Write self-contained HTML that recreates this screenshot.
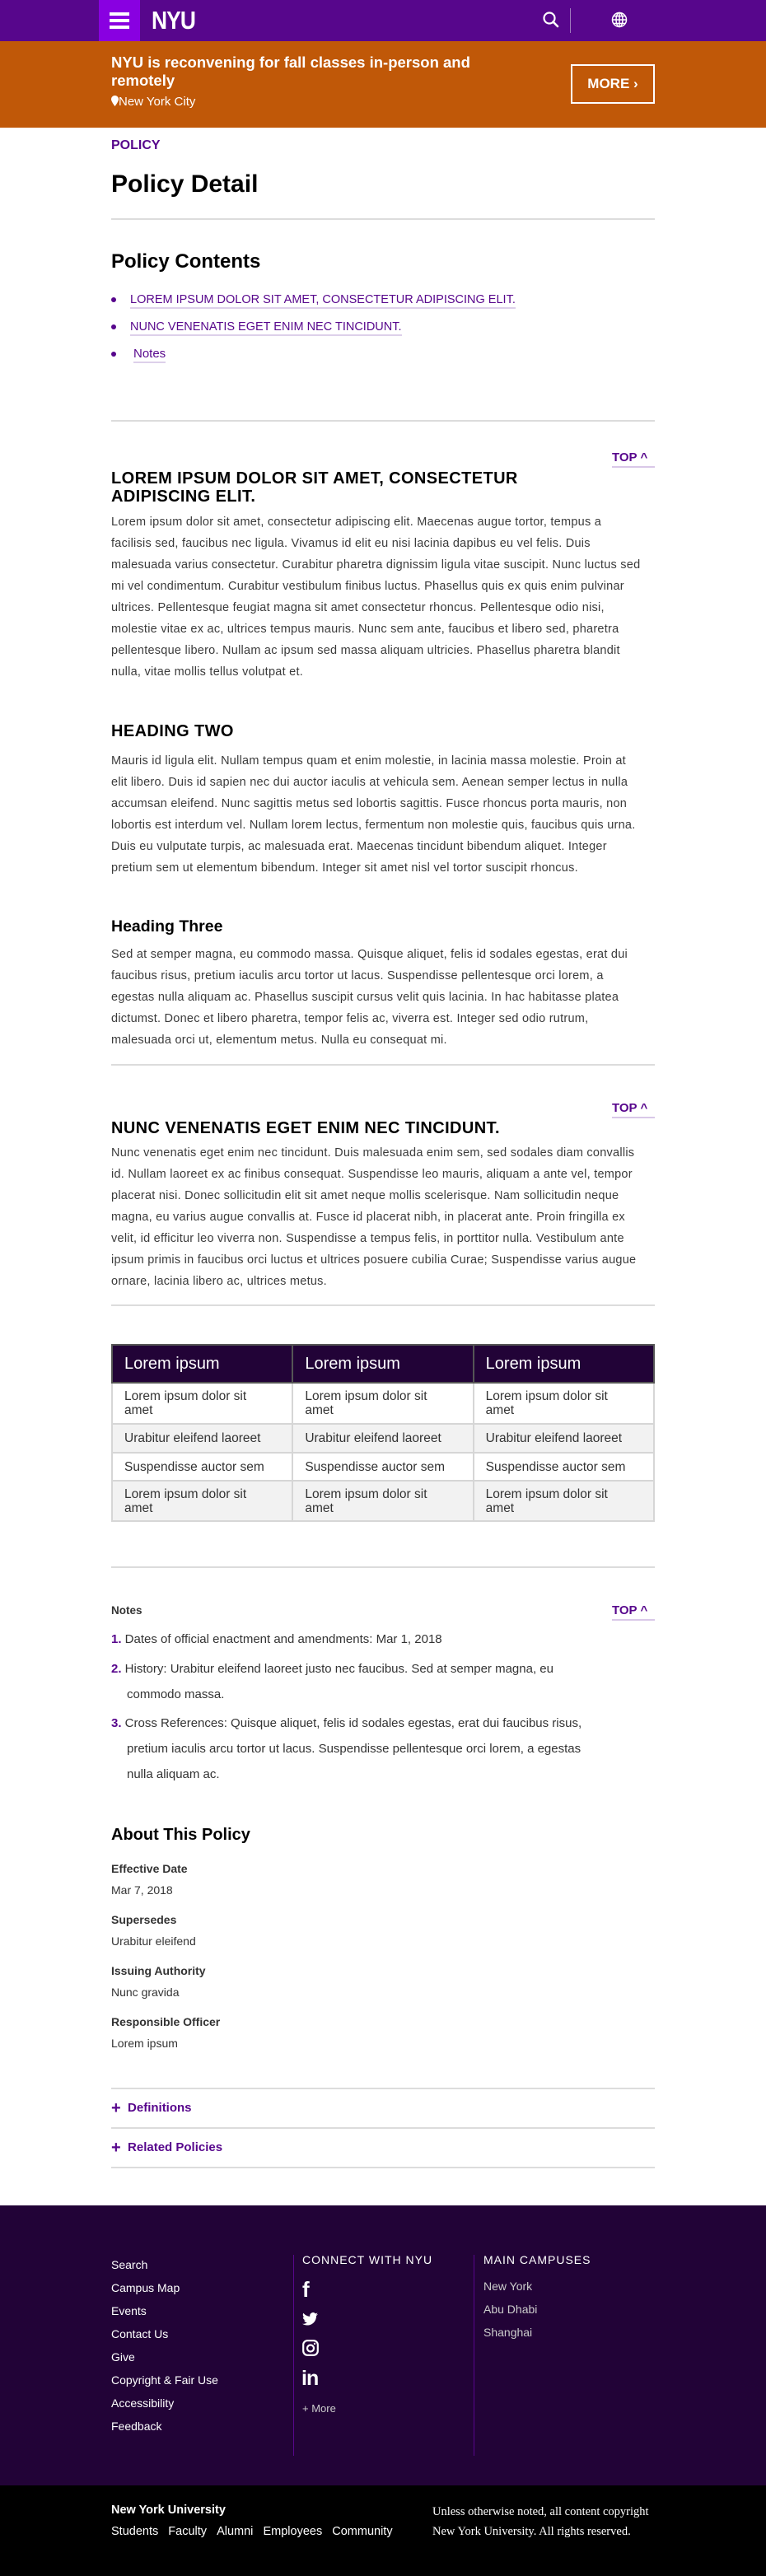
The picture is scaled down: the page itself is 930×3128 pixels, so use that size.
<!DOCTYPE html>
<html><head><meta charset="utf-8">
<style>
*{margin:0;padding:0;box-sizing:border-box}
body{width:930px;height:3128px;position:relative;font-family:"Liberation Sans",sans-serif;background:#fff;overflow:hidden}
.a{position:absolute;left:135px;white-space:nowrap}
.p{position:absolute;left:135px;width:700px;font-size:14.5px;letter-spacing:0.25px;line-height:26px;color:#3b3b3b;white-space:nowrap}
.hr{position:absolute;left:135px;width:660px;height:2px;background:#dcdcdc}
.top{position:absolute;left:743px;width:52px;font-size:15px;font-weight:bold;color:#57068c;border-bottom:2px solid #d9c8e8;line-height:20px}
.h2{font-size:20px;font-weight:bold;color:#000;line-height:22px;letter-spacing:0.4px}
.lnk{color:#57068c;font-size:14.5px;border-bottom:2px solid #ddd0ea;line-height:18px}
.dot{position:absolute;left:135px;width:6px;height:6px;border-radius:3px;background:#57068c}
table{position:absolute;left:135px;top:1632px;width:660px;border-collapse:collapse;font-size:15.5px;color:#333}
td,th{border:2px solid #d6d6d6;padding:0 14px;text-align:left;vertical-align:middle;line-height:17px;width:220px}
th{background:#220337;color:#fff;font-weight:normal;font-size:20px;height:46px;border-color:#555}
.f{position:absolute;font-size:14px;color:#fff;white-space:nowrap}
.lab{font-size:14px;font-weight:bold;color:#333}
.val{font-size:14px;color:#333}
</style></head><body>
<div style="position:absolute;left:0;top:0;width:930px;height:50px;background:#57068c"></div>
<div style="position:absolute;left:120px;top:0;width:50px;height:50px;background:#8900e1"></div>
<div style="position:absolute;left:133px;top:15px;width:24px;height:4px;background:#fff"></div>
<div style="position:absolute;left:133px;top:23px;width:24px;height:4px;background:#fff"></div>
<div style="position:absolute;left:133px;top:31px;width:24px;height:4px;background:#fff"></div>
<div style="position:absolute;left:184px;top:8px;font-size:31px;color:#fff;font-weight:bold;letter-spacing:-1px;line-height:34px;transform:scaleX(.85);transform-origin:left">NYU</div>
<svg style="position:absolute;left:658px;top:13px" width="22" height="22" viewBox="0 0 22 22"><circle cx="9" cy="9" r="6.5" fill="none" stroke="#fff" stroke-width="2.2"/><path d="M13.5 13.5L19 19" stroke="#fff" stroke-width="2.6" stroke-linecap="round"/></svg>
<div style="position:absolute;left:692px;top:10px;width:1px;height:30px;background:#9f7bbd"></div>
<svg style="position:absolute;left:742px;top:14px" width="20" height="20" viewBox="0 0 20 20"><g fill="none" stroke="#fff" stroke-width="1.5"><circle cx="10" cy="10" r="8.5"/><ellipse cx="10" cy="10" rx="4" ry="8.5"/><path d="M10 1.5v17M1.5 10h17M3 5.5h14M3 14.5h14"/></g></svg>
<div style="position:absolute;left:0;top:50px;width:930px;height:105px;background:#c05808"></div>
<div class="a" style="top:65px;font-size:18.5px;font-weight:bold;color:#fff;line-height:22px">NYU is reconvening for fall classes in-person and<br>remotely</div>
<div class="a" style="top:114px;font-size:15px;color:#fff;line-height:20px"><svg width="9" height="13" viewBox="0 0 9 13" style="vertical-align:-1px"><path d="M4.5 0C2 0 0 2 0 4.5 0 7.5 4.5 13 4.5 13S9 7.5 9 4.5C9 2 7 0 4.5 0z" fill="#fff"/></svg>New York City</div>
<div style="position:absolute;left:693px;top:78px;width:102px;height:48px;border:2px solid #fff;color:#fff;font-weight:bold;font-size:17px;line-height:44px;text-align:center">MORE ›</div>
<div class="a" style="top:167px;font-size:16px;font-weight:bold;color:#57068c;line-height:20px">POLICY</div>
<div class="a" style="top:204px;font-size:30px;font-weight:bold;color:#000;line-height:40px">Policy Detail</div>
<div class="hr" style="top:265px"></div>
<div class="a" style="top:302px;font-size:24px;font-weight:bold;color:#000;line-height:32px">Policy Contents</div>
<div class="dot" style="top:361px"></div><div class="a lnk" style="left:158px;top:355px">LOREM IPSUM DOLOR SIT AMET, CONSECTETUR ADIPISCING ELIT.</div>
<div class="dot" style="top:394px"></div><div class="a lnk" style="left:158px;top:388px">NUNC VENENATIS EGET ENIM NEC TINCIDUNT.</div>
<div class="dot" style="top:427px"></div><div class="a lnk" style="left:162px;top:421px;font-size:15px">Notes</div>
<div class="hr" style="top:510px"></div>
<div class="top" style="top:546px">TOP ^</div>
<div class="a h2" style="top:570px">LOREM IPSUM DOLOR SIT AMET, CONSECTETUR<br>ADIPISCING ELIT.</div>
<div class="p" style="top:621px">Lorem ipsum dolor sit amet, consectetur adipiscing elit. Maecenas augue tortor, tempus a<br>facilisis sed, faucibus nec ligula. Vivamus id elit eu nisi lacinia dapibus eu vel felis. Duis<br>malesuada varius consectetur. Curabitur pharetra dignissim ligula vitae suscipit. Nunc luctus sed<br>mi vel condimentum. Curabitur vestibulum finibus luctus. Phasellus quis ex quis enim pulvinar<br>ultrices. Pellentesque feugiat magna sit amet consectetur rhoncus. Pellentesque odio nisi,<br>molestie vitae ex ac, ultrices tempus mauris. Nunc sem ante, faucibus et libero sed, pharetra<br>pellentesque libero. Nullam ac ipsum sed massa aliquam ultricies. Phasellus pharetra blandit<br>nulla, vitae mollis tellus volutpat et.</div>
<div class="a h2" style="top:877px">HEADING TWO</div>
<div class="p" style="top:911px">Mauris id ligula elit. Nullam tempus quam et enim molestie, in lacinia massa molestie. Proin at<br>elit libero. Duis id sapien nec dui auctor iaculis at vehicula sem. Aenean semper lectus in nulla<br>accumsan eleifend. Nunc sagittis metus sed lobortis sagittis. Fusce rhoncus porta mauris, non<br>lobortis est interdum vel. Nullam lorem lectus, fermentum non molestie quis, faucibus quis urna.<br>Duis eu vulputate turpis, ac malesuada erat. Maecenas tincidunt bibendum aliquet. Integer<br>pretium sem ut elementum bibendum. Integer sit amet nisl vel tortor suscipit rhoncus.</div>
<div class="a" style="top:1114px;font-size:19.5px;font-weight:bold;color:#000;line-height:22px">Heading Three</div>
<div class="p" style="top:1146px">Sed at semper magna, eu commodo massa. Quisque aliquet, felis id sodales egestas, erat dui<br>faucibus risus, pretium iaculis arcu tortor ut lacus. Suspendisse pellentesque orci lorem, a<br>egestas nulla aliquam ac. Phasellus suscipit cursus velit quis lacinia. In hac habitasse platea<br>dictumst. Donec et libero pharetra, tempor felis ac, viverra est. Integer sed odio rutrum,<br>malesuada orci ut, elementum metus. Nulla eu consequat mi.</div>
<div class="hr" style="top:1292px"></div>
<div class="top" style="top:1336px">TOP ^</div>
<div class="a h2" style="top:1359px">NUNC VENENATIS EGET ENIM NEC TINCIDUNT.</div>
<div class="p" style="top:1387px">Nunc venenatis eget enim nec tincidunt. Duis malesuada enim sem, sed sodales diam convallis<br>id. Nullam laoreet ex ac finibus consequat. Suspendisse leo mauris, aliquam a ante vel, tempor<br>placerat nisi. Donec sollicitudin elit sit amet neque mollis scelerisque. Nam sollicitudin neque<br>magna, eu varius augue convallis at. Fusce id placerat nibh, in placerat ante. Proin fringilla ex<br>velit, id efficitur leo viverra non. Suspendisse a tempus felis, in porttitor nulla. Vestibulum ante<br>ipsum primis in faucibus orci luctus et ultrices posuere cubilia Curae; Suspendisse varius augue<br>ornare, lacinia libero ac, ultrices metus.</div>
<div class="hr" style="top:1584px"></div>
<table>
<tr><th>Lorem ipsum</th><th>Lorem ipsum</th><th>Lorem ipsum</th></tr>
<tr style="height:50px"><td>Lorem ipsum dolor sit<br>amet</td><td>Lorem ipsum dolor sit<br>amet</td><td>Lorem ipsum dolor sit<br>amet</td></tr>
<tr style="height:35px;background:#f2f2f2"><td>Urabitur eleifend laoreet</td><td>Urabitur eleifend laoreet</td><td>Urabitur eleifend laoreet</td></tr>
<tr style="height:34px"><td>Suspendisse auctor sem</td><td>Suspendisse auctor sem</td><td>Suspendisse auctor sem</td></tr>
<tr style="height:49px;background:#f2f2f2"><td>Lorem ipsum dolor sit<br>amet</td><td>Lorem ipsum dolor sit<br>amet</td><td>Lorem ipsum dolor sit<br>amet</td></tr>
</table>
<div class="hr" style="top:1902px"></div>
<div class="a" style="top:1947px;font-size:13.5px;font-weight:bold;color:#333;line-height:18px">Notes</div>
<div class="top" style="top:1946px">TOP ^</div>
<div class="a" style="top:1981px;font-size:15px;color:#333;line-height:20px"><b style="color:#57068c">1.</b> Dates of official enactment and amendments: Mar 1, 2018</div>
<div class="a" style="top:2011px;font-size:15px;color:#333;line-height:31px"><b style="color:#57068c">2.</b> History: Urabitur eleifend laoreet justo nec faucibus. Sed at semper magna, eu<br><span style="padding-left:19px">commodo massa.</span></div>
<div class="a" style="top:2077px;font-size:15px;color:#333;line-height:31px"><b style="color:#57068c">3.</b> Cross References: Quisque aliquet, felis id sodales egestas, erat dui faucibus risus,<br><span style="padding-left:19px">pretium iaculis arcu tortor ut lacus. Suspendisse pellentesque orci lorem, a egestas</span><br><span style="padding-left:19px">nulla aliquam ac.</span></div>
<div class="a" style="top:2215px;font-size:20px;font-weight:bold;color:#000;line-height:26px">About This Policy</div>
<div class="a lab" style="top:2261px">Effective Date</div><div class="a val" style="top:2287px">Mar 7, 2018</div>
<div class="a lab" style="top:2323px">Supersedes</div><div class="a val" style="top:2349px">Urabitur eleifend</div>
<div class="a lab" style="top:2385px">Issuing Authority</div><div class="a val" style="top:2411px">Nunc gravida</div>
<div class="a lab" style="top:2447px">Responsible Officer</div><div class="a val" style="top:2473px">Lorem ipsum</div>
<div class="hr" style="top:2535px"></div>
<div class="a" style="top:2550px;font-size:15px;font-weight:bold;color:#57068c;line-height:20px"><span style="font-size:20px;vertical-align:-2px">+</span>&nbsp; Definitions</div>
<div class="hr" style="top:2583px"></div>
<div class="a" style="top:2598px;font-size:15px;font-weight:bold;color:#57068c;line-height:20px"><span style="font-size:20px;vertical-align:-2px">+</span>&nbsp; Related Policies</div>
<div class="hr" style="top:2631px"></div>
<div style="position:absolute;left:0;top:2678px;width:930px;height:340px;background:#220337"></div>
<div style="position:absolute;left:0;top:3018px;width:930px;height:110px;background:#000"></div>
<div class="f" style="left:135px;top:2736px;line-height:28px">Search<br>Campus Map<br>Events<br>Contact Us<br>Give<br>Copyright &amp; Fair Use<br>Accessibility<br>Feedback</div>
<div style="position:absolute;left:356px;top:2738px;width:1px;height:244px;background:#57068c"></div>
<div style="position:absolute;left:575px;top:2738px;width:1px;height:244px;background:#57068c"></div>
<div class="f" style="left:367px;top:2736px;letter-spacing:1px;font-size:14px">CONNECT WITH NYU</div>
<div class="f" style="left:587px;top:2736px;letter-spacing:1px;font-size:14px">MAIN CAMPUSES</div>
<div class="f" style="left:367px;top:2765px;font-size:26px;font-weight:bold;line-height:30px">f</div>
<svg style="position:absolute;left:367px;top:2808px" width="19" height="16" viewBox="0 0 24 20"><path d="M24 2.4a10 10 0 0 1-2.8.8A5 5 0 0 0 23.3.4a10 10 0 0 1-3.1 1.2A4.9 4.9 0 0 0 11.8 6 14 14 0 0 1 1.7.9a4.9 4.9 0 0 0 1.5 6.6 4.9 4.9 0 0 1-2.2-.6 4.9 4.9 0 0 0 3.9 4.9 5 5 0 0 1-2.2.1 4.9 4.9 0 0 0 4.6 3.4A9.9 9.9 0 0 1 0 17.3 14 14 0 0 0 7.5 19.5c9.1 0 14-7.5 14-14v-.6A10 10 0 0 0 24 2.4z" fill="#fff"/></svg>
<svg style="position:absolute;left:367px;top:2841px" width="20" height="20" viewBox="0 0 20 20"><rect x="1.2" y="1.2" width="17.6" height="17.6" rx="5" fill="none" stroke="#fff" stroke-width="2.2"/><circle cx="10" cy="10.5" r="4" fill="none" stroke="#fff" stroke-width="2.2"/><circle cx="15" cy="5" r="1.2" fill="#fff"/></svg>
<div class="f" style="left:366px;top:2874px;font-size:25px;font-weight:bold;line-height:28px;letter-spacing:-1px">in</div>
<div class="f" style="left:367px;top:2917px;color:#ccc;font-size:13px">+ More</div>
<div class="f" style="left:587px;top:2762px;color:#ccc;line-height:28px">New York<br>Abu Dhabi<br>Shanghai</div>
<div class="f" style="left:135px;top:3040px;font-weight:bold;font-size:14.5px">New York University</div>
<div class="f" style="left:135px;top:3066px;font-size:14.5px;word-spacing:2px">Students &nbsp;Faculty &nbsp;Alumni &nbsp;Employees &nbsp;Community</div>
<div class="f" style="left:525px;top:3038px;font-family:'Liberation Serif',serif;font-size:14.5px;line-height:24px">Unless otherwise noted, all content copyright<br>New York University. All rights reserved.</div>
</body></html>
